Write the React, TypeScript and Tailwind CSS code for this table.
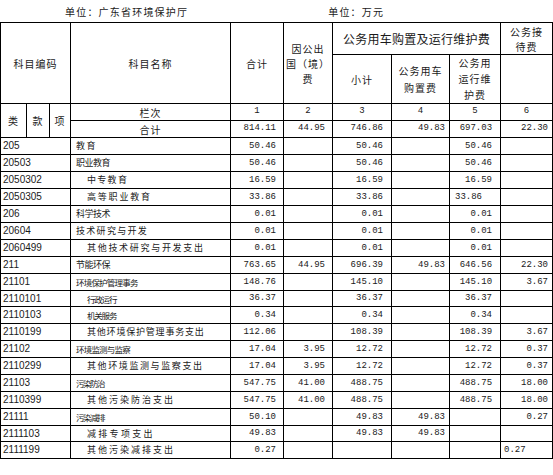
const cjk = "font-['Noto_Sans_CJK_SC',sans-serif]";
const mono = "font-['Liberation_Mono',monospace]";

// 每列右侧留白（合计 / 出国 / 小计 / 购置 / 运行 / 接待）
const padR = ["pr-[7px]", "pr-[7px]", "pr-[8px]", "pr-[4px]", "pr-[8px]", "pr-[4px]"];

type Row = { code: string; name: string; nc: string; v: string[]; left?: number; lp?: string };

const rows: Row[] = [
  { code: "205", name: "教育", nc: "pl-[5px] text-[9px] tracking-[1.5px]", v: ["50.46", "", "50.46", "", "50.46", ""] },
  { code: "20503", name: "职业教育", nc: "pl-[5px] text-[9px] tracking-[-0.5px]", v: ["50.46", "", "50.46", "", "50.46", ""] },
  { code: "2050302", name: "中专教育", nc: "pl-[16px] text-[9px] tracking-[1.3px]", v: ["16.59", "", "16.59", "", "16.59", ""] },
  { code: "2050305", name: "高等职业教育", nc: "pl-[16px] text-[9px] tracking-[1.8px]", v: ["33.86", "", "33.86", "", "33.86", ""], left: 4, lp: "pl-[5px]" },
  { code: "206", name: "科学技术", nc: "pl-[5px] text-[9px] tracking-[-0.5px]", v: ["0.01", "", "0.01", "", "0.01", ""] },
  { code: "20604", name: "技术研究与开发", nc: "pl-[5px] text-[9px] tracking-[1.3px]", v: ["0.01", "", "0.01", "", "0.01", ""] },
  { code: "2060499", name: "其他技术研究与开发支出", nc: "pl-[16px] text-[9px] tracking-[1.7px]", v: ["0.01", "", "0.01", "", "0.01", ""] },
  { code: "211", name: "节能环保", nc: "pl-[5px] text-[9px] tracking-[-0.5px]", v: ["763.65", "44.95", "696.39", "49.83", "646.56", "22.30"] },
  { code: "21101", name: "环境保护管理事务", nc: "pl-[5px] text-[8.5px] tracking-[-0.8px]", v: ["148.76", "", "145.10", "", "145.10", "3.67"] },
  { code: "2110101", name: "行政运行", nc: "pl-[16px] text-[8.5px] tracking-[-1.2px]", v: ["36.37", "", "36.37", "", "36.37", ""] },
  { code: "2110103", name: "机关服务", nc: "pl-[16px] text-[8.5px] tracking-[-1.2px]", v: ["0.34", "", "0.34", "", "0.34", ""] },
  { code: "2110199", name: "其他环境保护管理事务支出", nc: "pl-[16px] text-[9px] tracking-[0.8px]", v: ["112.06", "", "108.39", "", "108.39", "3.67"] },
  { code: "21102", name: "环境监测与监察", nc: "pl-[5px] text-[8.5px] tracking-[-0.8px]", v: ["17.04", "3.95", "12.72", "", "12.72", "0.37"] },
  { code: "2110299", name: "其他环境监测与监察支出", nc: "pl-[16px] text-[9px] tracking-[1.6px]", v: ["17.04", "3.95", "12.72", "", "12.72", "0.37"] },
  { code: "21103", name: "污染防治", nc: "pl-[5px] text-[8.5px] tracking-[-1.5px]", v: ["547.75", "41.00", "488.75", "", "488.75", "18.00"] },
  { code: "2110399", name: "其他污染防治支出", nc: "pl-[16px] text-[9px] tracking-[2px]", v: ["547.75", "41.00", "488.75", "", "488.75", "18.00"] },
  { code: "21111", name: "污染减排", nc: "pl-[5px] text-[8.5px] tracking-[-1.5px]", v: ["50.10", "", "49.83", "49.83", "", "0.27"] },
  { code: "2111103", name: "减排专项支出", nc: "pl-[16px] text-[9px] tracking-[2.3px]", v: ["49.83", "", "49.83", "49.83", "", ""] },
  { code: "2111199", name: "其他污染减排支出", nc: "pl-[16px] text-[9px] tracking-[2px]", v: ["0.27", "", "", "", "", "0.27"], left: 5, lp: "pl-[3px]" },
];

const cell = "border border-black p-0";
const head = `${cell} ${cjk} text-[10px] tracking-[1px] text-center align-middle leading-[15px]`;

export default function App() {
  return (
    <div className="w-[553px] h-[475px] bg-white text-[#1a1a1a] overflow-hidden">
      {/* 单位行 */}
      <div className={`h-[22px] flex items-center ${cjk} text-[10px] tracking-[1.2px]`}>
        <span className="ml-[65px]">单位：广东省环境保护厅</span>
        <span className="ml-[140px]">单位：万元</span>
      </div>

      <table className="table-fixed border-collapse w-[552px]">
        <colgroup>
          <col className="w-[26px]" />
          <col className="w-[23px]" />
          <col className="w-[21px]" />
          <col className="w-[160px]" />
          <col className="w-[53px]" />
          <col className="w-[49px]" />
          <col className="w-[59px]" />
          <col className="w-[58px]" />
          <col className="w-[51px]" />
          <col className="w-[52px]" />
        </colgroup>
        <tbody>
          <tr className="h-[32px]">
            <td colSpan={3} rowSpan={2} className={head}>科目编码</td>
            <td rowSpan={2} className={head}>科目名称</td>
            <td rowSpan={2} className={head}>合计</td>
            <td rowSpan={2} className={`${head} leading-[15.5px]`}>因公出<br />国（境）<br />费</td>
            <td colSpan={3} className={`${cell} ${cjk} text-[12px] tracking-[0.25px] text-center`}>公务用车购置及运行维护费</td>
            <td className={head}>公务接<br />待费</td>
          </tr>
          <tr className="h-[49px]">
            <td className={head}>小计</td>
            <td className={`${head} leading-[17px]`}>公务用车<br />购置费</td>
            <td className={`${head} leading-[16px]`}>公务用<br />运行维<br />护费</td>
            <td className={cell}></td>
          </tr>
          <tr className="h-[17px]">
            <td rowSpan={2} className={head}>类</td>
            <td rowSpan={2} className={head}>款</td>
            <td rowSpan={2} className={head}>项</td>
            <td className={head}>栏次</td>
            {["1", "2", "3", "4", "5", "6"].map((n) => (
              <td key={n} className={`${cell} ${mono} text-[9px] text-center`}>{n}</td>
            ))}
          </tr>
          <tr className="h-[17px]">
            <td className={head}>合计</td>
            {["814.11", "44.95", "746.86", "49.83", "697.03", "22.30"].map((n, i) => (
              <td key={i} className={`${cell} ${mono} text-[9px] text-right ${padR[i]}`}>{n}</td>
            ))}
          </tr>
          {rows.map((r, ri) => (
            <tr key={r.code} className={ri === 9 || ri === 17 ? "h-[16px]" : "h-[17px]"}>
              <td colSpan={3} className={`${cell} pl-[2px] font-['Liberation_Sans',sans-serif] text-[10px] leading-none`}>{r.code}</td>
              <td className={`${cell} ${cjk} leading-[12px] whitespace-nowrap ${r.nc}`}>{r.name}</td>
              {r.v.map((x, i) => (
                <td
                  key={i}
                  className={`${cell} ${mono} text-[9px] leading-none ${r.left === i ? `text-left ${r.lp}` : `text-right ${padR[i]}`}`}
                >
                  {x}
                </td>
              ))}
            </tr>
          ))}
        </tbody>
      </table>
    </div>
  );
}
